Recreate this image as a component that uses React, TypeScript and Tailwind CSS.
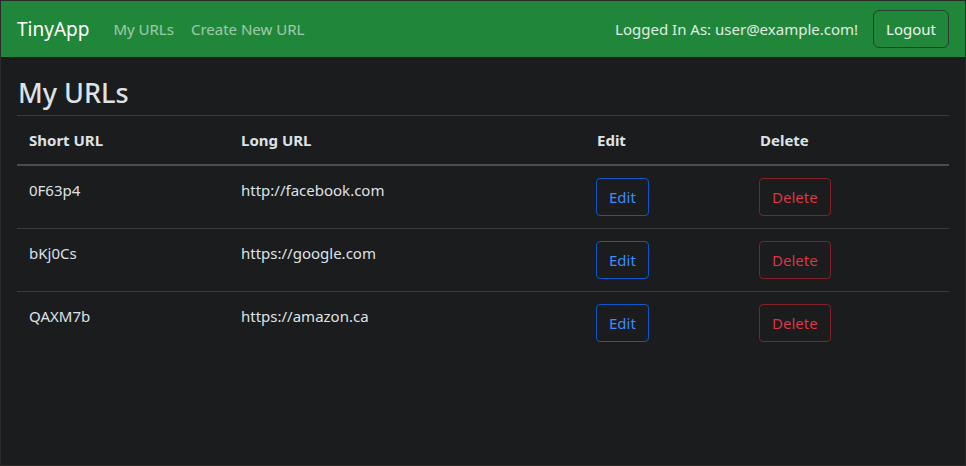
import React from 'react';

const urls = [
  { id: '0F63p4', long: 'http://facebook.com' },
  { id: 'bKj0Cs', long: 'https://google.com' },
  { id: 'QAXM7b', long: 'https://amazon.ca' },
];

const App: React.FC = () => {
  return (
    <div className="w-[966px] h-[466px] bg-[#1b1c1e] border border-[#2b2b2b] text-[#dee2e6] overflow-hidden" style={{ fontFamily: '"Noto Sans", "Open Sans", sans-serif' }}>
      <nav className="h-[56px] bg-[#20873a] flex items-center justify-between pl-[16px] pr-[16px]">
        <div className="flex items-center">
          <span className="text-[19px] text-white mr-[24px] leading-none">TinyApp</span>
          <a className="text-[15px] text-white/55 mr-[17px]">My URLs</a>
          <a className="text-[15px] text-white/55">Create New URL</a>
        </div>
        <div className="flex items-center">
          <span className="text-[15px] text-white/85 mr-[15px]">Logged In As: user@example.com!</span>
          <button className="h-[38px] px-[12px] rounded-[6px] border border-[#2d3a31] text-[15px] text-white/90">Logout</button>
        </div>
      </nav>

      <div className="px-[16px]">
        <h1 className="text-[27px] font-medium leading-tight mt-[19px] mb-[5px] ml-[1px]">My URLs</h1>
        <table className="w-full border-collapse text-[15px]">
          <thead>
            <tr className="border-t border-[#3a3b3d] border-b-2 border-b-[#4a4d50] h-[50px]">
              <th className="text-left font-bold px-[12px] w-[212px]">Short URL</th>
              <th className="text-left font-bold px-[12px] w-[356px]">Long URL</th>
              <th className="text-left font-bold px-[12px] w-[163px]">Edit</th>
              <th className="text-left font-bold px-[12px]">Delete</th>
            </tr>
          </thead>
          <tbody>
            {urls.map(u => (
              <tr key={u.id} className="border-b border-[#3a3b3d] last:border-b-0">
                <td className="px-[12px] pt-[12px] pb-[12px] align-top leading-[24px]">{u.id}</td>
                <td className="px-[12px] pt-[12px] pb-[12px] align-top leading-[24px]">{u.long}</td>
                <td className="px-[11px] pt-[12px] pb-[12px] align-top">
                  <button className="h-[38px] px-[12px] rounded-[4px] border border-[#0a58ca] text-[#3d8bfd] text-[15px]">Edit</button>
                </td>
                <td className="px-[11px] pt-[12px] pb-[12px] align-top">
                  <button className="h-[38px] px-[12px] rounded-[4px] border border-[#842029] text-[#dc3545] text-[15px]">Delete</button>
                </td>
              </tr>
            ))}
          </tbody>
        </table>
      </div>
    </div>
  );
};

export default App;
